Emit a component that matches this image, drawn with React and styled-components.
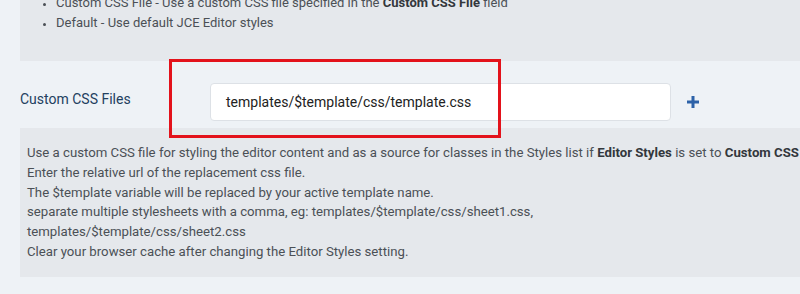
import React from "react";
import styled, { createGlobalStyle } from "styled-components";

const Global = createGlobalStyle`
  html, body {
    margin: 0;
    padding: 0;
    background: #eef2f6;
    font-family: Roboto, "Liberation Sans", sans-serif;
    overflow: hidden;
  }
`;

const Page = styled.div`
  width: 800px;
  height: 294px;
  padding-left: 20px;
  box-sizing: border-box;
  overflow: hidden;
`;

const Panel = styled.div`
  background: #e5e8ec;
  color: #4b5056;
  font-size: ${(p) => p.$size || "13px"};
  line-height: ${(p) => p.$lh || "20px"};
  padding: ${(p) => p.$pad};
  margin-top: ${(p) => p.$offset || "0"};
  white-space: nowrap;
`;

const List = styled.ul`
  margin: 0;
  padding: 0 0 0 36px;
  list-style: disc outside;
  li::marker {
    font-size: 11px;
  }
`;

const Strong = styled.b`
  color: #33373c;
  font-weight: 700;
`;

const Row = styled.div`
  position: relative;
  display: flex;
  align-items: flex-start;
  height: 67px;
  padding-top: 22px;
  box-sizing: border-box;
`;

const Label = styled.label`
  width: 190px;
  flex: none;
  font-size: 14px;
  line-height: 20px;
  color: #23405f;
  margin-top: 6px;
`;

const Input = styled.div`
  width: 461px;
  height: 38px;
  flex: none;
  box-sizing: border-box;
  background: #fff;
  border: 1px solid #dde1e6;
  border-radius: 4px;
  display: flex;
  align-items: center;
  padding-left: 15px;
  font-size: 14px;
  color: #222;
`;

const AddButton = styled.button`
  border: 0;
  background: none;
  padding: 0;
  margin: 12px 0 0 15px;
  display: flex;
  color: #2d62a8;
`;

const Highlight = styled.div`
  position: absolute;
  left: 149px;
  top: -2px;
  width: 332px;
  height: 79px;
  box-sizing: border-box;
  border: 3px solid #e3121b;
  pointer-events: none;
`;

export default function App() {
  return (
    <Page>
      <Global />
      <Panel $pad="0 0 28px 0" $offset="-7px">
        <List>
          <li>
            Custom CSS File - Use a custom CSS file specified in the{" "}
            <Strong>Custom CSS File</Strong> field
          </li>
          <li>Default - Use default JCE Editor styles</li>
        </List>
      </Panel>
      <Row>
        <Label>Custom CSS Files</Label>
        <Input>templates/$template/css/template.css</Input>
        <AddButton aria-label="Add">
          <svg width="14" height="14" viewBox="0 0 14 14">
            <path d="M7 1v12M1 7h12" stroke="currentColor" strokeWidth="3" />
          </svg>
        </AddButton>
        <Highlight />
      </Row>
      <Panel $pad="15px 0 15px 7px" $size="13.2px" $lh="19.8px">
        Use a custom CSS file for styling the editor content and as a source for
        classes in the Styles list if <Strong>Editor Styles</Strong> is set to{" "}
        <Strong>Custom CSS File</Strong>
        <br />
        Enter the relative url of the replacement css file.
        <br />
        The $template variable will be replaced by your active template name.
        <br />
        separate multiple stylesheets with a comma, eg:
        templates/$template/css/sheet1.css,
        <br />
        templates/$template/css/sheet2.css
        <br />
        Clear your browser cache after changing the Editor Styles setting.
      </Panel>
    </Page>
  );
}
